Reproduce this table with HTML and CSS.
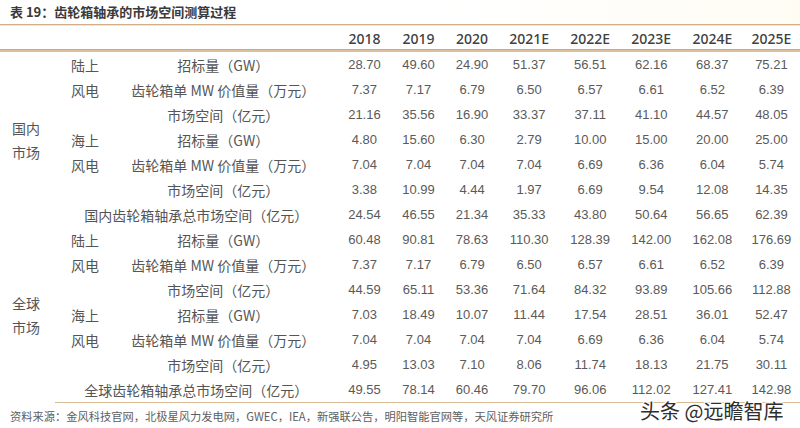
FILE: index.html
```html
<!DOCTYPE html>
<html lang="zh">
<head>
<meta charset="utf-8">
<title>表 19</title>
<link rel="stylesheet" href="styles.css">
</head>
<body>
<div class="page">
  <div class="title">表 19：齿轮箱轴承的市场空间测算过程</div>
  <table class="data">
    <colgroup>
      <col class="c-region"><col class="c-type"><col class="c-label">
      <col class="c-n1"><col class="c-n1"><col class="c-n2"><col class="c-n3"><col class="c-n3"><col class="c-n3"><col class="c-n3"><col class="c-n4">
    </colgroup>
    <thead>
      <tr><th colspan="3"></th><th>2018</th><th>2019</th><th>2020</th><th>2021E</th><th>2022E</th><th>2023E</th><th>2024E</th><th>2025E</th></tr>
    </thead>
    <tbody>
      <tr><td rowspan="7" class="region">国内<br>市场</td><td class="type">陆上</td><td class="label">招标量（GW）</td><td>28.70</td><td>49.60</td><td>24.90</td><td>51.37</td><td>56.51</td><td>62.16</td><td>68.37</td><td>75.21</td></tr>
      <tr><td class="type">风电</td><td class="label">齿轮箱单 MW 价值量（万元）</td><td>7.37</td><td>7.17</td><td>6.79</td><td>6.50</td><td>6.57</td><td>6.61</td><td>6.52</td><td>6.39</td></tr>
      <tr><td class="type"></td><td class="label">市场空间（亿元）</td><td>21.16</td><td>35.56</td><td>16.90</td><td>33.37</td><td>37.11</td><td>41.10</td><td>44.57</td><td>48.05</td></tr>
      <tr><td class="type">海上</td><td class="label">招标量（GW）</td><td>4.80</td><td>15.60</td><td>6.30</td><td>2.79</td><td>10.00</td><td>15.00</td><td>20.00</td><td>25.00</td></tr>
      <tr><td class="type">风电</td><td class="label">齿轮箱单 MW 价值量（万元）</td><td>7.04</td><td>7.04</td><td>7.04</td><td>7.04</td><td>6.69</td><td>6.36</td><td>6.04</td><td>5.74</td></tr>
      <tr><td class="type"></td><td class="label">市场空间（亿元）</td><td>3.38</td><td>10.99</td><td>4.44</td><td>1.97</td><td>6.69</td><td>9.54</td><td>12.08</td><td>14.35</td></tr>
      <tr><td colspan="2" class="label">国内齿轮箱轴承总市场空间（亿元）</td><td>24.54</td><td>46.55</td><td>21.34</td><td>35.33</td><td>43.80</td><td>50.64</td><td>56.65</td><td>62.39</td></tr>
      <tr><td rowspan="7" class="region">全球<br>市场</td><td class="type">陆上</td><td class="label">招标量（GW）</td><td>60.48</td><td>90.81</td><td>78.63</td><td>110.30</td><td>128.39</td><td>142.00</td><td>162.08</td><td>176.69</td></tr>
      <tr><td class="type">风电</td><td class="label">齿轮箱单 MW 价值量（万元）</td><td>7.37</td><td>7.17</td><td>6.79</td><td>6.50</td><td>6.57</td><td>6.61</td><td>6.52</td><td>6.39</td></tr>
      <tr><td class="type"></td><td class="label">市场空间（亿元）</td><td>44.59</td><td>65.11</td><td>53.36</td><td>71.64</td><td>84.32</td><td>93.89</td><td>105.66</td><td>112.88</td></tr>
      <tr><td class="type">海上</td><td class="label">招标量（GW）</td><td>7.03</td><td>18.49</td><td>10.07</td><td>11.44</td><td>17.54</td><td>28.51</td><td>36.01</td><td>52.47</td></tr>
      <tr><td class="type">风电</td><td class="label">齿轮箱单 MW 价值量（万元）</td><td>7.04</td><td>7.04</td><td>7.04</td><td>7.04</td><td>6.69</td><td>6.36</td><td>6.04</td><td>5.74</td></tr>
      <tr><td class="type"></td><td class="label">市场空间（亿元）</td><td>4.95</td><td>13.03</td><td>7.10</td><td>8.06</td><td>11.74</td><td>18.13</td><td>21.75</td><td>30.11</td></tr>
      <tr class="last"><td colspan="2" class="label">全球齿轮箱轴承总市场空间（亿元）</td><td>49.55</td><td>78.14</td><td>60.46</td><td>79.70</td><td>96.06</td><td>112.02</td><td>127.41</td><td>142.98</td></tr>
    </tbody>
  </table>
  <div class="source">资料来源：金风科技官网，北极星风力发电网，GWEC，IEA，新强联公告，明阳智能官网等，天风证券研究所</div>
  <div class="watermark">头条 @远瞻智库</div>
</div>
</body>
</html>
```

FILE: styles.css
```css
html, body {
  margin: 0;
  padding: 0;
  background: #ffffff;
}
body {
  width: 800px;
  height: 428px;
  overflow: hidden;
  font-family: "Noto Sans CJK SC", "Noto Sans", sans-serif;
}
.page {
  position: relative;
  width: 800px;
  height: 428px;
}
.title {
  height: 24px;
  line-height: 24px;
  padding-left: 10px;
  font-size: 13px;
  font-weight: 700;
  color: #3a3a3a;
  border-bottom: 1px solid #cfae88;
  box-shadow: 0 1px 0 #f3e4d2;
  background: linear-gradient(to right, #ffffff 0%, #ffffff 55%, #fffcf4 100%);
}
.data {
  width: 800px;
  border-collapse: collapse;
  table-layout: fixed;
  margin-top: 1px;
}
.c-region { width: 55px; }
.c-type { width: 54px; }
.c-label { width: 228px; }
.c-n1 { width: 54px; }
.c-n2 { width: 53px; }
.c-n3 { width: 61px; }
.c-n4 { width: 57px; }
.data th {
  height: 24px;
  padding: 0;
  font-family: "Noto Sans", "Noto Sans CJK SC", sans-serif;
  font-size: 14px;
  font-weight: 500;
  color: #404040;
  text-align: center;
  border-bottom: 2px solid #dcbf9c;
  box-shadow: inset 0 -1px 0 #cfa87e;
}
.data td {
  height: 25px;
  padding: 0;
  text-align: center;
  font-family: "Liberation Sans", Arial, sans-serif;
  font-size: 13px;
  color: #5a5a5a;
  white-space: nowrap;
}
.data td.region {
  text-align: left;
  padding-left: 12px;
  font-family: "Noto Sans CJK SC", sans-serif;
  font-size: 14px;
  line-height: 24px;
  color: #555555;
  vertical-align: middle;
}
.data td.type {
  text-align: left;
  padding-left: 16px;
  font-family: "Noto Sans CJK SC", sans-serif;
  font-size: 14px;
  color: #555555;
}
.data td.label {
  font-family: "Noto Sans CJK SC", sans-serif;
  font-size: 14px;
  color: #555555;
}
.data tr.last td {
  border-bottom: 1px solid #d8b994;
}
.source {
  padding: 5px 0 0 10px;
  font-size: 11.25px;
  line-height: 16px;
  color: #5e5e5e;
}
.watermark {
  position: absolute;
  left: 640px;
  top: 401px;
  font-size: 20px;
  line-height: 20px;
  color: #2e2e2e;
  text-shadow: 1px 1px 0 #ffffff, -1px -1px 0 #ffffff, 1px -1px 0 #ffffff, -1px 1px 0 #ffffff;
}
```
